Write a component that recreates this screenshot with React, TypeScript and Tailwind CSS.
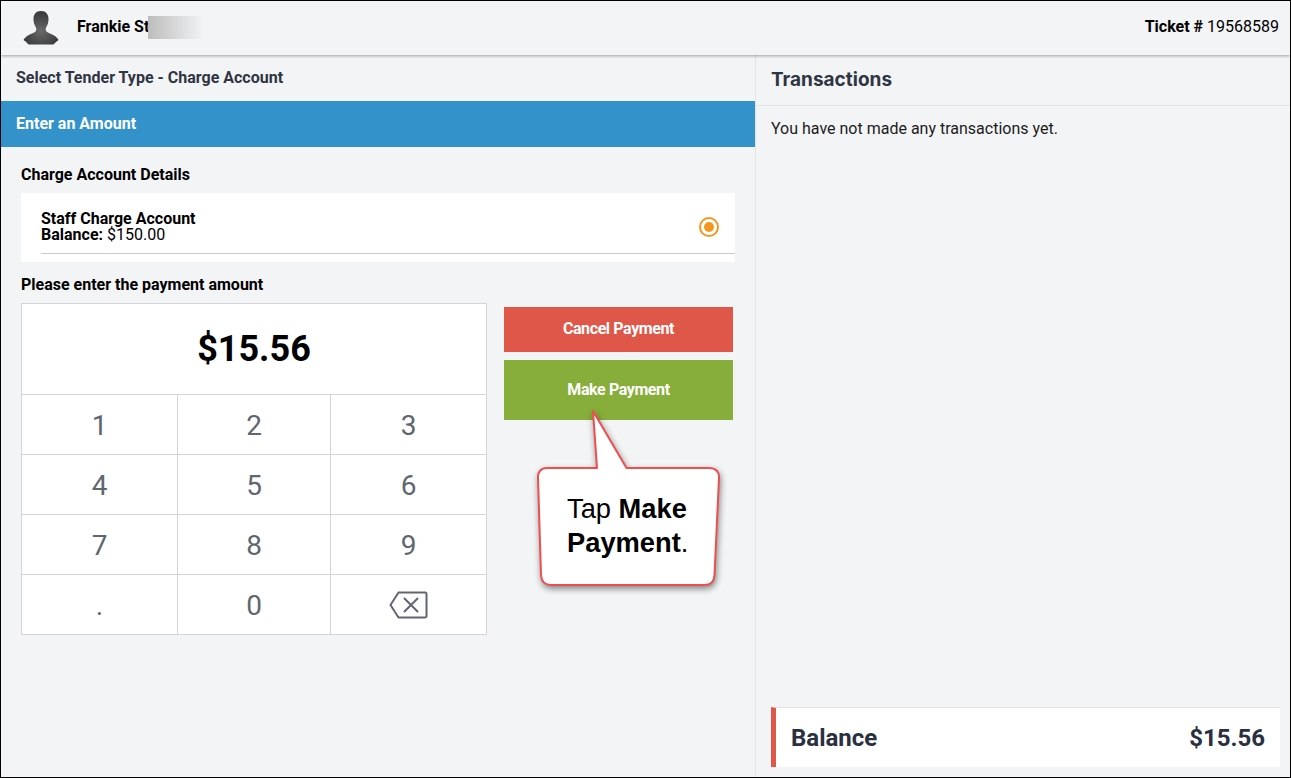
const keys = ['1', '2', '3', '4', '5', '6', '7', '8', '9', '.', '0'];

const Avatar = () => (
  <svg width="36" height="34" viewBox="0 0 36 34" className="shrink-0">
    <defs>
      <radialGradient id="bust" cx="50%" cy="60%" r="60%">
        <stop offset="0%" stopColor="#6a6a6a" />
        <stop offset="100%" stopColor="#363636" />
      </radialGradient>
    </defs>
    <path
      d="M18 0c-5 0-7.500 3.500-7.500 8 0 3 .8 6 2.200 8 .7 1 .8 3 .3 4-1 1.500-6 3-9.500 5.500C2 26.800 1 28 .5 29c2 1.500 3.500 2.500 5 4.500h25c1.500-2 3.500-3 5-4.500-.5-1-1.500-2.200-3-3.500-3.500-2.500-8.500-4-9.500-5.500-.5-1-.4-3 .3-4 1.400-2 2.200-5 2.200-8 0-4.500-2.500-8-7.500-8z"
      fill="url(#bust)"
    />
  </svg>
);

const BackspaceKey = () => (
  <svg width="39" height="28" viewBox="0 0 39 28" fill="none" stroke="#5f6670" strokeWidth="2" strokeLinejoin="round" strokeLinecap="round" className="-ml-[1px]">
    <path d="M9.500 1.500H36a1.500 1.500 0 0 1 1.500 1.500v22a1.500 1.500 0 0 1-1.500 1.500H9.500L1.500 14z" />
    <path d="M15.500 7.500l13 13M28.500 7.500l-13 13" />
  </svg>
);

const Callout = () => (
  <div className="absolute left-[530px] top-[404px] w-[200px] h-[196px]">
    <svg width="200" height="196" viewBox="0 0 200 196" className="absolute inset-0 drop-shadow-[1px_3px_3px_rgba(0,0,0,0.45)]">
      <path
        d="M62 6L66 63H16C10 63 6.500 67 7 73L10 170C10.500 177 14 180 20 180H173C180 180 183 177 183.500 170L188 73C188.500 67 185 63 178 63H95.500Z"
        fill="#fff"
        stroke="#f04e4e"
        strokeWidth="2"
        strokeLinejoin="round"
      />
    </svg>
    <div className="absolute left-[36px] top-[87px] w-[150px] font-['Liberation_Sans',sans-serif] text-[27.300px] leading-[34px] text-black">
      Tap <b>Make Payment</b>.
    </div>
  </div>
);

export default function App() {
  return (
    <div className="relative w-[1291px] h-[778px] border border-black bg-[#f3f4f6] font-['Roboto',sans-serif] text-black flex flex-col overflow-hidden">
      {/* top bar */}
      <header className="h-[54px] shrink-0 flex items-center justify-between pl-[22px] pr-[11px] shadow-[0_1px_3px_rgba(0,0,0,0.35)] relative">
        <div className="flex items-center">
          <Avatar />
          <span className="ml-[18px] text-[16px] leading-[20px] font-bold -mt-[3px]">Frankie St</span>
          <span className="-ml-[1px] w-[56px] h-[23px] -mt-[2px] bg-gradient-to-r from-[#bdbdbd] to-[#f3f4f6]" />
        </div>
        <div className="text-[16px] -mt-[2px]">
          <b>Ticket #</b> 19568589
        </div>
      </header>

      <div className="flex-1 flex min-h-0">
        {/* left side */}
        <main className="w-[755px] shrink-0 border-r border-[#e1e3e6] flex flex-col">
          <div className="h-[46px] flex items-center pl-[15px] text-[16px] font-bold text-[#2f3542]">
            Select Tender Type - Charge Account
          </div>
          <div className="h-[46px] flex items-center pl-[15px] pb-[1px] bg-[#3492cb] text-[16px] font-bold text-white">
            Enter an Amount
          </div>

          <div className="pl-[20px] pr-[20px]">
            <div className="h-[46px] flex items-center pt-[10px] text-[16px] font-bold">Charge Account Details</div>
            <div className="h-[69px] bg-white pl-[20px] pt-[18px]">
              <div className="h-[43px] border-b border-[#c9c9c9] pr-[16px] flex justify-between text-[16px] leading-[16px]">
                <div>
                  <div className="font-bold">Staff Charge Account</div>
                  <div>
                    <b>Balance:</b> $150.00
                  </div>
                </div>
                <div className="w-[20px] h-[20px] mt-[6px] rounded-full border-2 border-[#f2961f] flex items-center justify-center">
                  <div className="w-[10px] h-[10px] rounded-full bg-[#f2961f]" />
                </div>
              </div>
            </div>
            <div className="h-[41px] flex items-center pt-[4px] text-[16px] font-bold">Please enter the payment amount</div>

            <div className="flex">
              <div className="w-[466px] h-[332px] shrink-0 border border-[#d3d5d9] bg-white flex flex-col">
                <div className="h-[90px] shrink-0 flex items-center justify-center text-[36px] font-bold">$15.56</div>
                <div className="flex-1 grid grid-cols-[156px_153px_1fr] grid-rows-4">
                  {keys.map((k, i) => (
                    <div
                      key={k}
                      className={`flex items-center justify-center pt-[2px] text-[28px] text-[#5f6670] border-t border-[#d3d5d9] ${
                        i % 3 !== 2 ? 'border-r' : ''
                      }`}
                    >
                      {k}
                    </div>
                  ))}
                  <div className="flex items-center justify-center border-t border-[#d3d5d9]">
                    <BackspaceKey />
                  </div>
                </div>
              </div>

              <div className="ml-[17px] w-[229px] pt-[4px] flex flex-col gap-[8px] text-[16px] font-bold text-white">
                <div className="h-[45px] bg-[#df5748] flex items-center justify-center tracking-[-0.4px] pb-[2px]">Cancel Payment</div>
                <div className="h-[60px] bg-[#87ad3a] flex items-center justify-center tracking-[-0.4px]">Make Payment</div>
              </div>
            </div>
          </div>
        </main>

        {/* right side */}
        <aside className="flex-1 flex flex-col min-w-0">
          <div className="h-[51px] shrink-0 flex items-center pl-[15px] border-b border-[#e1e3e6] font-['Inter',sans-serif] text-[19px] font-bold text-[#2f3542]">
            Transactions
          </div>
          <div className="pl-[15px] pt-[14px] text-[16px] leading-[18px] text-[#1c1c1c]">You have not made any transactions yet.</div>
          <div className="mt-auto mb-[10px] ml-[15px] mr-[10px] h-[60px] bg-white border-l-[5px] border-t border-t-[#e4e4e4] border-l-[#df5748] flex items-center justify-between pl-[15px] pr-[15px] text-[24px] font-bold text-[#2a3040]">
            <span>Balance</span>
            <span>$15.56</span>
          </div>
        </aside>
      </div>

      <Callout />
    </div>
  );
}
